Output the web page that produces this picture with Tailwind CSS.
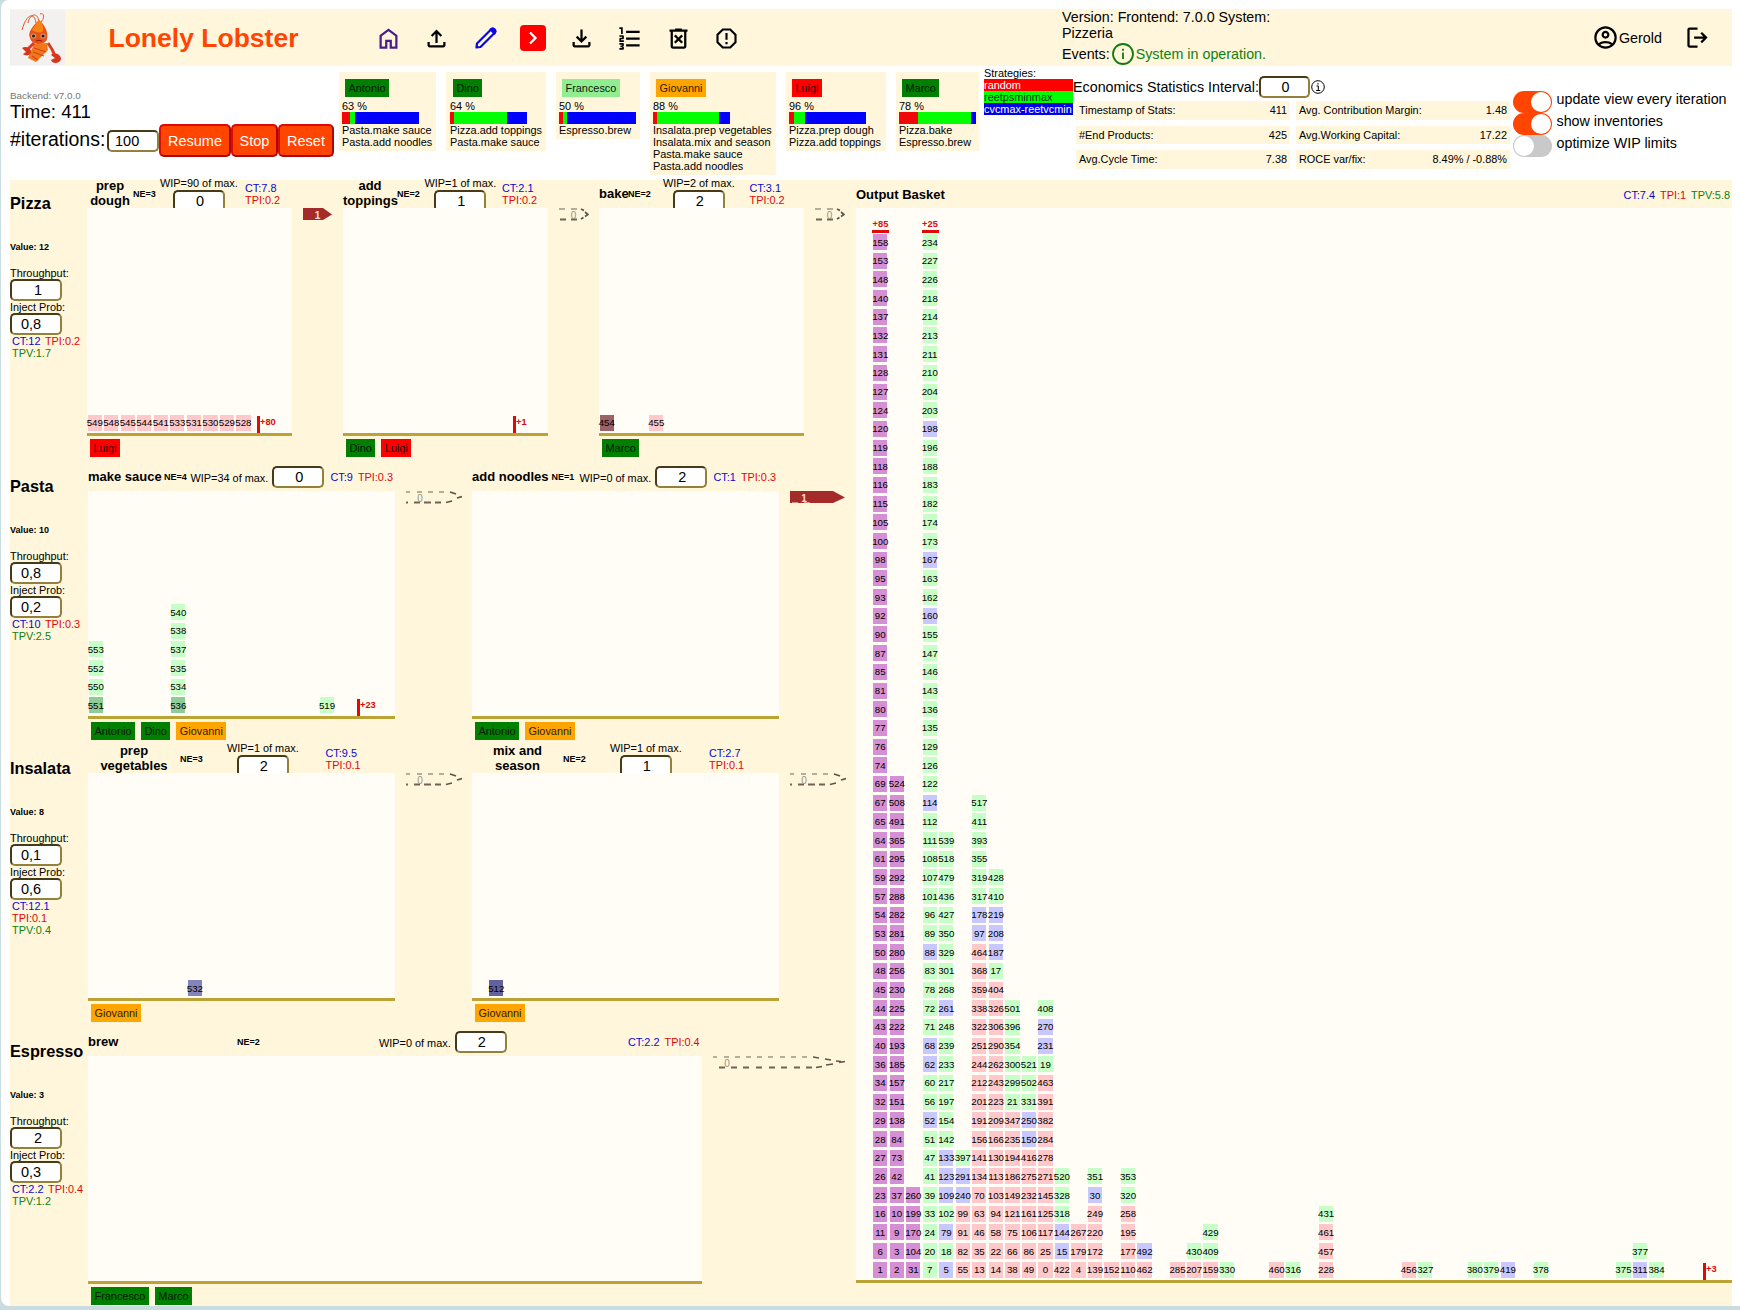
<!DOCTYPE html>
<html lang="en">
<head>
<meta charset="utf-8">
<title>Lonely Lobster</title>
<script src="https://cdn.jsdelivr.net/npm/@tailwindcss/browser@4"></script>
</head>
<body class="w-[1740px] h-[1310px] overflow-hidden bg-[#c9dde0] font-['Liberation_Sans',Arial,sans-serif] text-black text-[10.9px] leading-3">
<div class="ml-px h-[1306px] w-[1760px] overflow-hidden rounded-[8px] bg-white pl-[9px] pt-[9px]">

  <header class="flex h-[57px] w-[1722px] items-center bg-[#fff6dc]">
    <svg class="h-[55px] w-[55px] shrink-0 bg-[#f2f1f0]" viewBox="0 0 55 55">
      <g fill="none" stroke="#e0542a" stroke-width="1"><path d="M26 13C25 3 17 2 12 20"/><path d="M29 12C28 2 20 3 18 13"/><path d="M31 12C35 8 34 2 30 4"/></g>
      <path d="M29 10C34 14 39 22 37 29C35 36 22 36 20 28C17 22 24 15 29 10Z" fill="#e8501c"/>
      <path d="M29 10C32 13 34 17 33 21C30 24 25 22 22 20C24 16 27 13 29 10Z" fill="#f98412"/>
      <path d="M24 34L37 33L38 40L32 46L26 52L18 48Z" fill="#f07818"/>
      <path d="M24 38L36 42M23 42L34 46M22 46L28 50" stroke="#d8401c" stroke-width="1.2"/>
      <path d="M38 33Q43 40 45 46" stroke="#dd3a1c" stroke-width="3" fill="none"/>
      <path d="M24 33L17 40" stroke="#dd3a1c" stroke-width="3"/>
      <path d="M12 38C15 36 20 37 21 41C22 45 16 47 13 44L16 42Z" fill="#d8351c"/>
      <path d="M41 45C44 42 51 44 51 49C50 54 42 54 41 50L45 48Z" fill="#d8351c"/>
      <circle cx="23.500" cy="26" r="2.600" fill="#c9a070"/><circle cx="33" cy="26" r="2.600" fill="#c9a070"/>
      <circle cx="23.500" cy="26" r="1.500" fill="#3a1a10"/><circle cx="33" cy="26" r="1.500" fill="#3a1a10"/>
      <path d="M26 31Q29 29.500 32 31" stroke="#8a2010" fill="none"/>
    </svg>
    <h1 class="ml-[43.5px] w-[266px] text-[26.5px] leading-8 font-bold text-[#ff4500]">Lonely Lobster</h1>
    <nav class="flex items-center gap-[21.5px] pt-px">
      <svg class="size-[27px]" viewBox="0 -960 960 960" fill="#4b1c8a"><path d="M240-200h120v-240h240v240h120v-360L480-740 240-560v360Zm-80 80v-480l320-240 320 240v480H520v-240h-80v240H160Z"/></svg>
      <svg class="size-[27px]" viewBox="0 -960 960 960"><path d="M440-320v-326L336-542l-56-58 200-200 200 200-56 58-104-104v326h-80ZM240-160q-33 0-56.500-23.500T160-240v-120h80v120h480v-120h80v120q0 33-23.500 56.500T720-160H240Z"/></svg>
      <svg class="size-[27px]" viewBox="0 0 27 27" fill="none" stroke="#0a0ae0" stroke-width="2.200" stroke-linejoin="round"><path d="M4.500 22.500L5 18.500L19 4.500Q21 3 22.500 4.500Q24 6 22.500 8L8.500 22Z"/><path d="M18.500 4.500L22.500 8.500L23.500 6.500L22.500 4.500L20.500 3.500Z" fill="#0a0ae0"/></svg>
      <span class="flex h-[26px] w-[26px] items-center justify-center rounded-[4px] bg-[#ff0000]"><svg class="h-[26px] w-[26px]" viewBox="0 0 26 26" fill="none" stroke="#fff" stroke-width="2.300"><path d="M10 7.500L15.500 13L10 18.500"/></svg></span>
      <svg class="size-[27px]" viewBox="0 -960 960 960"><path d="M480-320 280-520l56-58 104 104v-326h80v326l104-104 56 58-200 200ZM240-160q-33 0-56.500-23.500T160-240v-120h80v120h480v-120h80v120q0 33-23.500 56.500T720-160H240Z"/></svg>
      <svg class="size-[27px]" viewBox="0 -960 960 960"><path d="M120-80v-60h100v-30h-60v-60h60v-30H120v-60h120q17 0 28.500 11.500T280-280v40q0 17-11.500 28.500T240-200q17 0 28.500 11.500T280-160v40q0 17-11.500 28.500T240-80H120Zm0-280v-110q0-17 11.500-28.500T160-510h60v-30H120v-60h120q17 0 28.500 11.500T280-560v70q0 17-11.500 28.500T240-450h-60v30h100v60H120Zm60-280v-180h-60v-60h120v240h-60Zm180 440v-80h480v80H360Zm0-240v-80h480v80H360Zm0-240v-80h480v80H360Z"/></svg>
      <svg class="size-[27px]" viewBox="0 -960 960 960"><path d="m376-300 104-104 104 104 56-56-104-104 104-104-56-56-104 104-104-104-56 56 104 104-104 104 56 56Zm-96 180q-33 0-56.500-23.500T200-200v-520h-40v-80h200v-40h240v40h200v80h-40v520q0 33-23.500 56.500T680-120H280Zm400-600H280v520h400v-520Z"/></svg>
      <svg class="size-[27px]" viewBox="0 0 24 24" fill="none" stroke="#000" stroke-width="1.900"><path d="M8.700 4H15.300L20 8.700V15.300L15.300 20H8.700L4 15.300V8.700Z"/><path d="M12 7V13.200M12 15V17"/></svg>
    </nav>
    <div class="ml-[322px] w-[530px] text-[14.3px] leading-4">
      <div>Version: Frontend: 7.0.0 System:</div><div>Pizzeria</div>
      <div class="flex items-center leading-[26px]">Events:<svg class="size-[24px] -my-1 mx-px" viewBox="0 0 24 24" fill="none" stroke="#107a10" stroke-width="1.800"><circle cx="12" cy="12" r="10"/><path d="M12 10.500V17M12 6.800V8.800"/></svg><span class="text-[#108010]">System in operation.</span></div>
    </div>
    <svg class="size-[27px] shrink-0" viewBox="0 -960 960 960"><path d="M234-276q51-39 114-61.500T480-360q69 0 132 22.500T726-276q35-41 54.500-93T800-480q0-133-93.500-226.500T480-800q-133 0-226.500 93.500T160-480q0 59 19.500 111t54.500 93Zm246-164q-59 0-99.500-40.500T340-580q0-59 40.500-99.500T480-720q59 0 99.500 40.500T620-580q0 59-40.500 99.500T480-440Zm0 360q-83 0-156-31.500T197-197q-54-54-85.500-127T80-480q0-83 31.500-156T197-763q54-54 127-85.500T480-880q83 0 156 31.500T763-763q54 54 85.500 127T880-480q0 83-31.500 156T763-197q-54 54-127 85.500T480-80Zm0-80q53 0 100-15.500t86-44.500q-39-29-86-44.500T480-280q-53 0-100 15.500T294-220q39 29 86 44.500T480-160Zm0-360q26 0 43-17t17-43q0-26-17-43t-43-17q-26 0-43 17t-17 43q0 26 17 43t43 17Z"/></svg>
    <span class="w-[65px] text-[14.3px] leading-4">Gerold</span>
    <svg class="size-[27px] shrink-0" viewBox="0 -960 960 960"><path d="M200-120q-33 0-56.500-23.500T120-200v-560q0-33 23.500-56.500T200-840h280v80H200v560h280v80H200Zm440-160-55-58 102-102H360v-80h327L585-622l55-58 200 200-200 200Z"/></svg>
  </header>

  <section class="flex h-[114px] w-[1730px] items-start">
    <div class="w-[329px] shrink-0 pt-[24px]">
      <div class="text-[9.9px] leading-3 text-[#777]">Backend: v7.0.0</div>
      <div class="text-[18.7px] leading-[19px] pb-[2px]">Time: 411</div>
      <div class="flex items-center pt-px">
        <span class="w-[97px] shrink-0 pb-1 text-[19.5px] leading-6 whitespace-nowrap">#iterations:</span>
        <span class="flex h-[22px] w-[52px] shrink-0 items-center rounded-[5px] border-2 border-t-[#463a18] border-l-[#463a18] border-r-[#93803c] border-b-[#93803c] bg-white pl-[6px] text-[14.5px]">100</span>
        <span class="flex h-[33px] w-[72px] shrink-0 items-center justify-center rounded-[5px] border-2 border-t-[#e00808] border-l-[#e00808] border-r-[#a80808] border-b-[#a80808] bg-[#ff4500] text-[14.5px] text-white">Resume</span>
        <span class="flex h-[33px] w-[47px] shrink-0 items-center justify-center rounded-[5px] border-2 border-t-[#e00808] border-l-[#e00808] border-r-[#a80808] border-b-[#a80808] bg-[#ff4500] text-[14.5px] text-white">Stop</span>
        <span class="flex h-[33px] w-[56px] shrink-0 items-center justify-center rounded-[5px] border-2 border-t-[#e00808] border-l-[#e00808] border-r-[#a80808] border-b-[#a80808] bg-[#ff4500] text-[14.5px] text-white">Reset</span>
      </div>
    </div>
    <div id="staff" class="flex w-[645px] shrink-0 items-start gap-[10px] pt-[6px]"></div>
    <div class="w-[89px] shrink-0 overflow-hidden whitespace-nowrap pt-px">
      <div>Strategies:</div>
      <div class="bg-[#ff0000] text-white">random</div>
      <div class="bg-[#00ff00] text-[#053005]">reetpsminmax</div>
      <div class="bg-[#0000e8] text-white">cvcmax-reetvcmin</div>
    </div>
    <div class="w-[440px] shrink-0 pt-[10px]">
      <div class="flex items-center text-[14.3px]"><span class="w-[186px] whitespace-nowrap">Economics Statistics Interval:</span><span class="flex h-[22px] w-[51px] items-center justify-center rounded-[5px] border-2 border-t-[#463a18] border-l-[#463a18] border-r-[#93803c] border-b-[#93803c] bg-white pl-0.5">0</span>
        <svg class="size-[14px] ml-px" viewBox="0 0 14 14" fill="none" stroke="#000"><circle cx="7" cy="7" r="6.300"/><path d="M7 3V4.600M5.500 6H7.300V10.500M5.200 10.500H9.200"/></svg></div>
      <div class="grid grid-cols-[214px_214px] gap-x-[6px] gap-y-[6px] pl-[3px] pt-[3px]">
        <div class="flex h-[18.500px] items-center justify-between bg-[#fff6dc] px-[3px]"><span>Timestamp of Stats:</span><span>411</span></div>
        <div class="flex h-[18.500px] items-center justify-between bg-[#fff6dc] px-[3px]"><span>Avg. Contribution Margin:</span><span>1.48</span></div>
        <div class="flex h-[18.500px] items-center justify-between bg-[#fff6dc] px-[3px]"><span>#End Products:</span><span>425</span></div>
        <div class="flex h-[18.500px] items-center justify-between bg-[#fff6dc] px-[3px]"><span>Avg.Working Capital:</span><span>17.22</span></div>
        <div class="flex h-[18.500px] items-center justify-between bg-[#fff6dc] px-[3px]"><span>Avg.Cycle Time:</span><span>7.38</span></div>
        <div class="flex h-[18.500px] items-center justify-between bg-[#fff6dc] px-[3px]"><span>ROCE var/fix:</span><span>8.49% / -0.88%</span></div>
      </div>
    </div>
    <div class="pt-[25px] text-[14.3px] leading-4 whitespace-nowrap">
      <div class="flex h-[22px] gap-[5px]"><span class="flex h-[22px] w-[38.500px] justify-end rounded-full bg-[#ff4500] p-px"><i class="size-[20px] rounded-full bg-white"></i></span>update view every iteration</div>
      <div class="flex h-[22px] gap-[5px]"><span class="flex h-[22px] w-[38.500px] justify-end rounded-full bg-[#ff4500] p-px"><i class="size-[20px] rounded-full bg-white"></i></span>show inventories</div>
      <div class="flex h-[22px] gap-[5px]"><span class="flex h-[22px] w-[38.500px] rounded-full bg-[#c9c9c9] p-px"><i class="size-[20px] rounded-full bg-white"></i></span>optimize WIP limits</div>
    </div>
  </section>

  <main class="flex h-[1126px] w-[1722px] bg-[#fff6dc]">
    <div id="processes" class="w-[846px] shrink-0"></div>
    <section class="w-[876px] shrink-0">
      <div class="flex h-7 items-center justify-between pr-[2px] pt-px">
        <h2 class="text-[13px] font-bold">Output Basket</h2>
        <div class="flex gap-[5px]"><span class="text-[#0808d0]">CT:7.4</span><span class="text-[#e00808]">TPI:1</span><span class="text-[#108010]">TPV:5.8</span></div>
      </div>
      <div id="basket" class="relative flex h-[1075px] items-end border-b-[3px] border-[#bda336] bg-[#fffdf5] pl-[16.500px]"></div>
    </section>
  </main>
</div>

<script>
const paint = {
  p: 'bg-[#d590d5]', g: 'bg-[#c8ffc8]', b: 'bg-[#c8c8ff]', r: 'bg-[#ffc8cb]',
  G: 'bg-[#90cc98]', R: 'bg-[#9c6268]', B: 'bg-[#8484bc]', D: 'bg-[#62629c]',
};
// A stack is "defaultColour: n n nb nr ..." listed from the bottom up; a missing one is an empty slot.
function stack(def) {
  if (!def) return '<div class="w-[16.530px] shrink-0"></div>';
  const [c, list] = def.split(':');
  const cells = list.trim().split(' ').map(t => {
    const m = t.match(/^(\d+)(\w?)$/);
    return `<div class="mb-[2.700px] flex h-4 w-[14.300px] shrink-0 items-center justify-center whitespace-nowrap pt-px ${paint[m[2] || c]}">${m[1]}</div>`;
  }).join('');
  return `<div class="-mb-[0.500px] flex w-[16.530px] shrink-0 flex-col-reverse items-start pl-[0.600px] text-[9.700px]">${cells}</div>`;
}
function stacks(map) {
  const max = Math.max(...Object.keys(map).map(Number));
  let out = '';
  for (let i = 0; i <= max; i++) out += stack(map[i]);
  return out;
}
const chipColor = { green: 'bg-[#008000] text-[#001800]', red: 'bg-[#ff0000] text-[#300000]', orange: 'bg-[#ffa500] text-[#301c00]', light: 'bg-[#90ee90] text-[#102010]' };
const chip = (n, c) => `<span class="flex h-[18px] items-center px-[3.500px] ${chipColor[c]}">${n}</span>`;

const staff = [
  ['Antonio', 'green', 63, [8, 5, 64], ['Pasta.make sauce', 'Pasta.add noodles'], 'w-[97px] pl-[3px]'],
  ['Dino', 'green', 64, [4, 53, 20], ['Pizza.add toppings', 'Pasta.make sauce'], 'w-[100px] pl-[4px]'],
  ['Francesco', 'light', 50, [4, 4, 69], ['Espresso.brew'], 'w-[84px] pl-[3px]'],
  ['Giovanni', 'orange', 88, [4, 62, 11], ['Insalata.prep vegetables', 'Insalata.mix and season', 'Pasta.make sauce', 'Pasta.add noodles'], 'w-[126px] pl-[3px]'],
  ['Luigi', 'red', 96, [5, 11, 61], ['Pizza.prep dough', 'Pizza.add toppings'], 'w-[100px] pl-[3px]'],
  ['Marco', 'green', 78, [19, 53, 5], ['Pizza.bake', 'Espresso.brew'], 'w-[83px] pl-[3px]'],
];
document.getElementById('staff').innerHTML = staff.map(([n, c, pct, bar, tasks, w]) => `
  <div class="${w} shrink-0 whitespace-nowrap bg-[#fff6dc] pt-[7px] pb-[3px]">
    <div class="flex pl-[3px]">${chip(n, c)}</div>
    <div class="pt-[3px]">${pct} %</div>
    <div class="flex h-3">
      <i class="bg-[#f00808]" style="width:${bar[0]}px"></i><i class="bg-[#00ff00]" style="width:${bar[1]}px"></i><i class="bg-[#0000ff]" style="width:${bar[2]}px"></i>
    </div>
    ${tasks.map(t => `<div>${t}</div>`).join('')}
  </div>`).join('');

const field = (v, pad) => `<span class="flex h-[22px] w-[52px] shrink-0 items-center rounded-[5px] border-2 border-t-[#463a18] border-l-[#463a18] border-r-[#93803c] border-b-[#93803c] bg-white text-[14.500px] ${pad}">${v}</span>`;

// Flow arrows between workstations; the upper half is thinner than the lower one.
function arrow(size, full) {
  const g = {
    s: { w: 'w-[30px]', n: 30, x: 20, t: 14.5, top: 'M0 1H6M12 1H18', bot: 'M1 11.500H7M12 11.500H18', tip: 'M22 1L25 2.500M26 4L29 6.500L26 8.500M24.500 9.500L22 11' },
    m: { w: 'w-[56px]', n: 56, x: 43, t: 14, top: 'M0 1H4M11 1H16M22 1H27M33 1H38', bot: 'M0 11.500H2M8 11.500H14M18 11.500H25M29 11.500H35', tip: 'M44 1L50 3M51 7L56 5.500M46 10L40 11.500' },
    l: { w: 'w-[133px]', n: 133, x: 100, t: 14, top: 'M0 1H4M11 1H16M22 1H27M33 1H38M44 1H49M55 1H60M67 1H72M78 1H83M89 1H94', bot: 'M6 11.500H12M18 11.500H24M30 11.500H36M43 11.500H49M56 11.500H62M68 11.500H74M81 11.500H87M93 11.500H99', tip: 'M100 1L106 2M112 3L118 4M123 5L128 5.500M126 6.500L132 5.500M120 8L113 9M109 10.500L103 11.500' },
  }[size];
  const shape = full
    ? `<path d="M0 0H${g.x}L${g.n - 1} 6.500L${g.x} 12H0Z" fill="#a52a2a"/>${size === 'm' ? '<path d="M2 12H8M14 12H20" stroke="#fff6dc"/>' : ''}`
    : `<g fill="none" stroke="#6c6554"><path d="${g.top}"/><path d="${g.bot}" stroke-width="2"/><path d="${g.tip}" stroke-width="1.700" stroke="#5c5648"/></g>`;
  return `<svg class="mt-7 ml-[11px] h-[13px] ${g.w} shrink-0" viewBox="0 0 ${g.n} 13">${shape}<text x="${g.t}" y="11" text-anchor="middle" font-size="10" ${full ? 'font-weight="bold" fill="#ffe0d8"' : 'fill="#96907c"'}>${full ? 1 : 0}</text></svg>`;
}

const N = 'text-[13px] font-bold leading-[15px]', E = 'text-[9px] font-bold';
const ct = (a, b) => `<span class="text-[#0808d0]">${a}</span><span class="text-[#e00808]">${b}</span>`;
// Narrow header: the name and the WIP limit wrap on two lines.
const narrow = (cols, name, ne, wip, v, a, b) => `<div class="grid h-7 items-center whitespace-nowrap ${cols}">
  <div class="-mt-[3px] text-center ${N}">${name}</div><div class="-mt-px ${E}">NE=${ne}</div>
  <div class="flex h-[32px] w-fit flex-col items-center -mt-[3px] self-start"><span class="leading-[13px]">WIP=${wip} of max.</span>${field(v, 'pl-[21px]')}</div>
  <div class="-mt-[2px] flex flex-col">${ct(a, b)}</div></div>`;
const wide = (cols, name, ne, wip, v, a, b) => `<div class="grid h-7 items-center whitespace-nowrap ${cols}">
  <div class="${N}">${name}</div><div class="${E}">NE=${ne}</div>
  <div class="flex items-center gap-[4px]"><span class="pt-0.5">WIP=${wip} of max.</span>${field(v, 'pl-[21px]')}</div>
  <div class="flex gap-[5px]">${ct(a, b)}</div></div>`;
const mark = (pos, t) => `<div class="absolute bottom-0 flex h-[17px] border-l-[3px] border-[#e00808] text-[9.300px] font-bold leading-[12px] text-[#e00808] ${pos}">${t}</div>`;
const station = (w, head, map, extra, chips) => `<div class="${w} shrink-0">${head}
  <div class="relative flex h-[228px] items-end border-b-[3px] border-[#bda336] bg-[#fffdf5]">${map ? stacks(map) : ''}${extra}</div>
  <div class="flex gap-[6px] pl-[3px] pt-[3px]">${chips.map(c => chip(c[0], c[1])).join('')}</div></div>`;

const procs = [
  { name: 'Pizza', value: 12, tp: ['1', 'pl-[22px]'], ip: '0,8', st: ['CT:12', 'TPI:0.2', 'TPV:1.7'], pad: 'pl-0', body:
    station('w-[205px]', narrow('grid-cols-[46px_27px_85px_47px]', 'prep<br>dough', 3, 90, 0, 'CT:7.8', 'TPI:0.2'), { 0: 'r: 549', 1: 'r: 548', 2: 'r: 545', 3: 'r: 544', 4: 'r: 541', 5: 'r: 533', 6: 'r: 531', 7: 'r: 530', 8: 'r: 529', 9: 'r: 528' }, mark('left-[170px]', '+80'), [['Luigi', 'red']])
    + `<div class="w-[51px] shrink-0">${arrow('s', true)}</div>`
    + station('w-[205px]', narrow('grid-cols-[54px_27.500px_77.500px_46px]', 'add<br>toppings', 2, 1, 1, 'CT:2.1', 'TPI:0.2'), null, mark('left-[170px]', '+1'), [['Dino', 'green'], ['Luigi', 'red']])
    + `<div class="w-[51px] shrink-0">${arrow('s', false)}</div>`
    + station('w-[205px]', narrow('grid-cols-[29px_35px_86.500px_54px]', 'bake', 2, 2, 2, 'CT:3.1', 'TPI:0.2'), { 0: 'R: 454', 3: 'r: 455' }, '', [['Marco', 'green']])
    + arrow('s', false) },
  { name: 'Pasta', value: 10, tp: ['0,8', 'pl-[9px]'], ip: '0,2', st: ['CT:10', 'TPI:0.3', 'TPV:2.5'], pad: 'pl-px', body:
    station('w-[307px]', wide('grid-cols-[76px_26.500px_140px_60px]', 'make sauce', 4, 34, 0, 'CT:9', 'TPI:0.3'), { 0: 'g: 551G 550 552 553', 5: 'g: 536G 534 535 537 538 540', 14: 'g: 519' }, mark('left-[269px]', '+23'), [['Antonio', 'green'], ['Dino', 'green'], ['Giovanni', 'orange']])
    + `<div class="w-[77px] shrink-0">${arrow('m', false)}</div>`
    + station('w-[307px]', wide('grid-cols-[79.500px_28px_134px_60px]', 'add noodles', 1, 0, 2, 'CT:1', 'TPI:0.3'), null, '', [['Antonio', 'green'], ['Giovanni', 'orange']])
    + arrow('m', true) },
  { name: 'Insalata', value: 8, tp: ['0,1', 'pl-[9px]'], ip: '0,6', st: ['CT:12.1', 'TPI:0.1', 'TPV:0.4'], pad: 'pl-px', body:
    station('w-[307px]', narrow('grid-cols-[92px_47px_98.500px_60px]', 'prep<br>vegetables', 3, 1, 2, 'CT:9.5', 'TPI:0.1'), { 6: 'B: 532' }, '', [['Giovanni', 'orange']])
    + `<div class="w-[77px] shrink-0">${arrow('m', false)}</div>`
    + station('w-[307px]', narrow('grid-cols-[91px_47px_99px_60px]', 'mix and<br>season', 2, 1, 1, 'CT:2.7', 'TPI:0.1'), { 1: 'D: 512' }, '', [['Giovanni', 'orange']])
    + arrow('m', false) },
  { name: 'Espresso', value: 3, tp: ['2', 'pl-[22px]'], ip: '0,3', st: ['CT:2.2', 'TPI:0.4', 'TPV:1.2'], pad: 'pl-px', body:
    station('w-[614px]', wide('grid-cols-[149px_142px_249px_74px]', 'brew', 2, 0, 2, 'CT:2.2', 'TPI:0.4'), null, '', [['Francesco', 'green'], ['Marco', 'green']])
    + arrow('l', false) },
];
document.getElementById('processes').innerHTML = procs.map(p => `
  <section class="flex h-[282.670px]">
    <div class="w-[77px] shrink-0">
      <h2 class="pt-[13px] text-[16.300px] font-bold leading-[20px] whitespace-nowrap">${p.name}</h2>
      <div class="pt-[28px] text-[9px] font-bold">Value: ${p.value}</div>
      <div class="pt-[14px]">Throughput:</div>${field(...p.tp)}
      <div>Inject Prob:</div>${field(p.ip, 'pl-[9px]')}
      <div class="flex flex-wrap gap-x-[4.500px] pl-[2px]"><span class="text-[#0808d0]">${p.st[0]}</span><span class="text-[#e00808]">${p.st[1]}</span><span class="w-full text-[#108010]">${p.st[2]}</span></div>
    </div>
    <div class="flex ${p.pad}">${p.body}</div>
  </section>`).join('');

const basket = {
  0: 'p: 1 6 11 16 23 26 27 28 29 32 34 36 40 43 44 45 48 50 53 54 57 59 61 64 65 67 69 74 76 77 80 81 85 87 90 92 93 95 98 100 105 115 116 118 119 120 124 127 128 131 132 137 140 148 153 158',
  1: 'p: 2 3 9 10 37 42 73 84 138 151 157 185 193 222 225 230 256 280 281 282 288 292 295 365 491 508 524',
  2: 'p: 31 104 170 199 260',
  3: 'g: 7 20 24 33 39 41 47 51 52b 56 60 62b 68b 71 72 78 83 88b 89 96 101 107 108 111 112 114b 122 126 129 135 136 143 146 147 155 160b 162 163 167b 173 174 182 183 188 196 198b 203 204 210 211 213 214 218 226 227 234',
  4: 'g: 5b 18 79b 102 109b 123b 133b 142 154 197 217 233 239 248 261b 268 301 329 350 427 436 479 518 539',
  5: 'r: 55 82 91 99 240b 291b 397g',
  6: 'r: 13 35 46 63 70 134 141 156 191 201 212 244 251 322 338 359 368 464 97b 178b 317g 319g 355g 393g 411g 517g',
  7: 'r: 14 22 58 94 103 113 130 166 209 223 243 262 290 306 326 404 17g 187b 208b 219b 410g 428g',
  8: 'r: 38 66 75 121 149 186 194 235 347 21g 299g 300g 354g 396g 501g',
  9: 'r: 49 86 106 161 232 275 416 150b 250b 331g 502g 521g',
  10: 'r: 0 25 117 125 145 271 278 284 382 391 463 19g 231b 270b 408g',
  11: 'r: 422 15b 144b 318g 328g 520g',
  12: 'r: 4 179 267', 13: 'r: 139 172 220 249 30b 351g', 14: 'r: 152',
  15: 'r: 110 177 195 258 320g 353g', 16: 'r: 462 492b',
  18: 'r: 285', 19: 'r: 207 430g', 20: 'r: 159 409g 429g', 21: 'g: 330',
  24: 'r: 460', 25: 'g: 316', 27: 'r: 228 457 461 431g',
  32: 'r: 456', 33: 'g: 327', 36: 'g: 380', 37: 'g: 379', 38: 'b: 419', 40: 'g: 378',
  45: 'g: 375', 46: 'b: 311 377g', 47: 'g: 384',
};
const over = (pos, t) => `<div class="absolute top-[11px] w-[17px] border-b-[3px] border-[#e00808] text-center text-[9.300px] font-bold leading-[11px] text-[#e00808] ${pos}">${t}</div>`;
document.getElementById('basket').innerHTML = stacks(basket) + over('left-[16px]', '+85') + over('left-[65.500px]', '+25') + mark('left-[847px]', '+3');
</script>
</body>
</html>
